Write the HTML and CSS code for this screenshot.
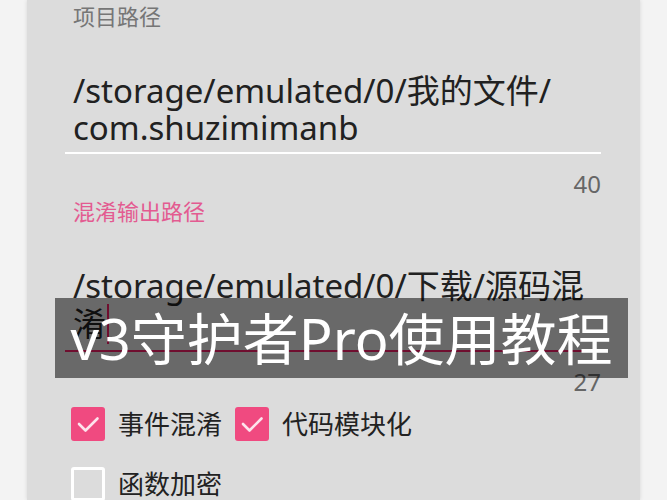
FILE: index.html
```html
<!DOCTYPE html>
<html lang="zh-CN">
<head>
    <meta charset="UTF-8">
    <meta name="viewport" content="width=device-width, initial-scale=1.0">
    <title>v3守护者Pro使用教程</title>
    <link rel="stylesheet" href="styles.css">
</head>
<body>
    <div class="card">
        <div class="label">项目路径</div>
        <div class="field">/storage/emulated/0/我的文件/<br>com.shuzimimanb</div>
        <div class="counter">40</div>

        <div class="label focused">混淆输出路径</div>
        <div class="field focused">/storage/emulated/0/下载/源码混<br>淆<span class="cursor"></span></div>
        <div class="counter">27</div>

        <div class="options">
            <label class="option">
                <span class="box checked">
                    <svg viewBox="0 0 34 34" width="34" height="34"><path d="M8 17l6.5 6.5 12-12" fill="none" stroke="#fde3ec" stroke-width="2.6" stroke-linecap="round" stroke-linejoin="round"/></svg>
                </span>
                事件混淆
            </label>
            <label class="option">
                <span class="box checked">
                    <svg viewBox="0 0 34 34" width="34" height="34"><path d="M8 17l6.5 6.5 12-12" fill="none" stroke="#fde3ec" stroke-width="2.6" stroke-linecap="round" stroke-linejoin="round"/></svg>
                </span>
                代码模块化
            </label>
        </div>
        <div class="options">
            <label class="option">
                <span class="box"></span>
                函数加密
            </label>
        </div>
    </div>

    <div class="caption">v3守护者Pro使用教程</div>
</body>
</html>
```

FILE: styles.css
```css
body {
    margin: 0;
    padding: 0;
    height: 500px;
    overflow: hidden;
    background-color: #f3f3f3;
    font-family: "Noto Sans", "Noto Sans CJK SC", sans-serif;
    color: #212121;
}
.card {
    box-sizing: border-box;
    margin-left: 27px;
    width: 613px;
    height: 500px;
    padding: 2px 39px 0 38px;
    background-color: #dcdcdc;
    box-shadow: 0 0 4px rgba(0,0,0,0.12);
}
.label {
    padding-left: 8px;
    font-size: 22px;
    line-height: 28px;
    color: #767676;
}
.label.focused {
    color: #e35b91;
}
.field {
    margin-top: 42px;
    padding: 0 0 6px 8px;
    font-size: 33px;
    line-height: 37px;
    color: #212121;
    border-bottom: 2px solid #ffffff;
}
.field.focused {
    border-bottom-color: #e91e63;
}
.cursor {
    display: inline-block;
    width: 2px;
    height: 40px;
    margin-left: 1px;
    vertical-align: -8px;
    background-color: #e91e63;
}
.counter {
    margin-top: 17px;
    text-align: right;
    font-size: 24px;
    line-height: 26px;
    color: #666666;
}
.options {
    display: flex;
    gap: 13px;
    margin-top: 12px;
    padding-left: 6px;
}
.options + .options {
    margin-top: 26px;
}
.option {
    display: flex;
    align-items: center;
    gap: 13px;
    font-size: 26px;
    line-height: 34px;
    color: #222222;
}
.box {
    box-sizing: border-box;
    display: block;
    width: 34px;
    height: 34px;
    border: 3px solid #ffffff;
    border-radius: 3px;
}
.box.checked {
    border: none;
    background-color: #f04a80;
}
.box svg {
    display: block;
}
.caption {
    position: absolute;
    left: 55px;
    top: 298px;
    width: 573px;
    height: 80px;
    background-color: rgba(0,0,0,0.52);
    color: #ffffff;
    font-size: 56px;
    line-height: 80px;
    text-align: center;
    white-space: nowrap;
}
```
